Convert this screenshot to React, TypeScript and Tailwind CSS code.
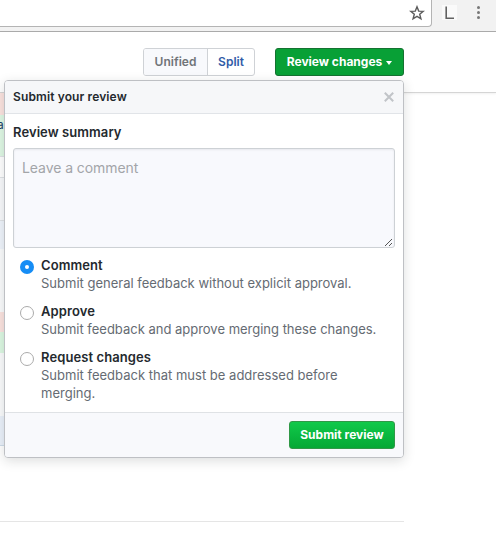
import React from "react";

const options = [
  { title: "Comment", lines: ["Submit general feedback without explicit approval."], spacing: ["tracking-[0px]"], checked: true },
  { title: "Approve", lines: ["Submit feedback and approve merging these changes."], spacing: ["tracking-[-0.01px]"], checked: false },
  { title: "Request changes", lines: ["Submit feedback that must be addressed before", "merging."], spacing: ["tracking-[0.01px]", "tracking-[0.01px]"], checked: false },
];

function BrowserBar() {
  return (
    <div className="flex h-8 items-start border-b border-[#ababab] bg-[#f2f2f2]">
      <div className="flex h-[27px] w-[432px] justify-end rounded-br-[4px] border-r border-b border-[#b4b4b4] bg-white pt-[5px] pr-[6px]">
        <svg width="16" height="16" viewBox="0 0 16 16" fill="none" stroke="#5c5c5c" strokeWidth="1.4">
          <path d="M8 1.8 9.7 6.1 14.2 6.4 10.7 9.3 11.9 13.8 8 11.3 4.1 13.8 5.3 9.3 1.8 6.4 6.3 6.1Z" />
        </svg>
      </div>
      <div className="mt-[5px] ml-[10px] flex h-[15px] w-[15px] justify-center bg-[#fafafa]">
        <svg width="15" height="15" viewBox="0 0 15 15" fill="none" stroke="#626262" strokeWidth="1.6">
          <path d="M4.2 1.5V13.2H12" />
        </svg>
      </div>
      <div className="mt-[6px] ml-[20px] flex w-[3px] flex-col gap-[2px]">
        <i className="h-[3px] w-[3px] rounded-full bg-[#777]" />
        <i className="h-[3px] w-[3px] rounded-full bg-[#777]" />
        <i className="h-[3px] w-[3px] rounded-full bg-[#777]" />
      </div>
    </div>
  );
}

function DiffRows() {
  return (
    <div className="w-[404px] overflow-hidden">
      <div className="h-[22px] bg-[#fbe3df]" />
      <div className="h-[41px] bg-[#dff8e4] text-[12px] leading-[20px] text-[#1d3f68]"><span className="-ml-[3px]">a</span></div>
      <div className="h-[22px] border-y border-[#dfe2e5]" />
      <div className="h-[43px] border-b border-[#dfe2e5] bg-[#f8f9fb]" />
      <div className="h-[28px] bg-[#eff4fb]" />
      <div className="h-[63px] bg-[#fafbfc]" />
      <div className="h-[20px] bg-[#fbe3df]" />
      <div className="h-[21px] bg-[#dcf8e2]" />
      <div className="h-[63px] bg-[#fafbfc]" />
      <div className="h-[30px] border-b border-[#cfdce9] bg-[#eaf1fa]" />
      <div className="h-[76px] border-b border-[#e5e5e5]" />
    </div>
  );
}

function ReviewMenu() {
  return (
    <div className="absolute top-[80px] left-[4px] flex h-[378px] w-[400px] flex-col rounded-[4px] border border-[#bec0c4] bg-white shadow-[0_3px_12px_rgba(27,31,35,0.15)]">
      <div className="flex h-[33px] shrink-0 items-center justify-between rounded-t-[3px] border-b border-[#e1e4e8] bg-[#f6f7f9] pr-[9px] pl-[8px]">
        <span className="text-[12px] font-semibold tracking-[0.12px]">Submit your review</span>
        <svg width="10" height="10" viewBox="0 0 10 10" fill="none" stroke="#c1c4c8" strokeWidth="2">
          <path d="M.8.8 9.2 9.2M9.2.8.8 9.2" />
        </svg>
      </div>
      <div className="flex grow flex-col px-[8px]">
        <div className="mt-[9px] h-[18px] text-[13px] leading-[18px] font-semibold tracking-[0.08px]">Review summary</div>
        <div className="mt-[7px] flex h-[100px] items-start justify-between rounded-[3px] border border-[#cdd1d5] bg-[#f8f9fd] pl-[8px] shadow-[inset_0_1px_2px_rgba(27,31,35,0.075)]">
          <span className="mt-[10px] text-[14px] leading-[18px] tracking-[-0.07px] text-[#a3a5a9]">Leave a comment</span>
          <svg className="mr-px self-end" width="9" height="9" viewBox="0 0 9 9" stroke="#555" strokeWidth="1">
            <path d="M1 8 8 1M5 8 8 5" />
          </svg>
        </div>
        <div className="mt-[8px] flex flex-col gap-[10px]">
          {options.map((o) => (
            <label key={o.title} className="flex">
              <span
                className={
                  o.checked
                    ? "mt-[4px] ml-[7px] flex h-[14px] w-[14px] items-center justify-center rounded-full bg-[#168df5]"
                    : "mt-[4px] ml-[7px] h-[14px] w-[14px] rounded-full border border-[#ababab] bg-white"
                }
              >
                {o.checked && <i className="h-[4px] w-[4px] rounded-full bg-white" />}
              </span>
              <span className="ml-[7px] block text-[13px] leading-[18px] whitespace-nowrap">
                <b className="block font-semibold tracking-[0.09px]">{o.title}</b>
                {o.lines.map((line, i) => (
                  <span key={line} className={"block text-[#656b73] " + o.spacing[i]}>{line}</span>
                ))}
              </span>
            </label>
          ))}
        </div>
      </div>
      <div className="flex h-[45px] shrink-0 justify-end rounded-b-[3px] border-t border-[#dfe2e5] bg-[#f8f9fc] pt-[8px] pr-[8px]">
        <button className="h-[28px] w-[106px] rounded-[3px] border border-[#309847] bg-linear-to-b from-[#10c94a] to-[#05a835] text-[12px] font-bold whitespace-nowrap text-white">
          Submit review
        </button>
      </div>
    </div>
  );
}

export default function App() {
  return (
    <div className="relative h-[546px] w-[496px] overflow-hidden bg-white font-[Inter,sans-serif] text-[#24292e]">
      <BrowserBar />
      <div className="flex h-[61px] border-b border-[#d5d5d5] pt-[16px] pl-[143px] shadow-[0_1px_2px_rgba(0,0,0,0.06)]">
        <div className="flex h-[28px] w-[112px] overflow-hidden rounded-[3px] border border-[#cfd2d6] text-[12px] font-semibold">
          <button className="w-[64px] border-r border-[#cfd2d6] bg-[#f8f9fc] text-[#707478]">Unified</button>
          <button className="grow text-[#315ca8]">Split</button>
        </div>
        <button className="ml-[20px] flex h-[28px] w-[129px] items-center justify-center gap-[4px] rounded-[3px] border border-[#157231] bg-[#08a036] text-[12px] font-bold whitespace-nowrap text-white">
          Review changes
          <i className="mt-[2px] h-0 w-0 border-x-[3.5px] border-t-[4px] border-x-transparent border-t-white" />
        </button>
      </div>
      <DiffRows />
      <ReviewMenu />
    </div>
  );
}
